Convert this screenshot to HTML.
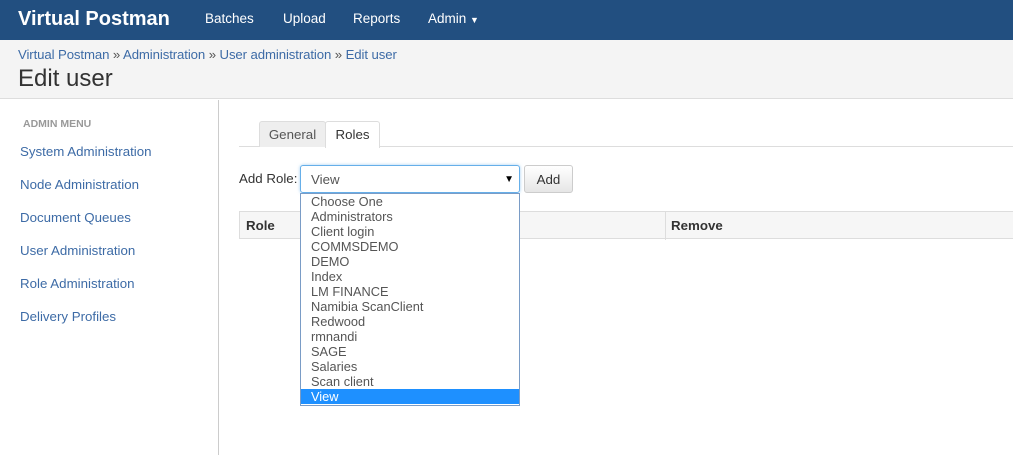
<!DOCTYPE html>
<html><head><meta charset="utf-8"><style>
*{box-sizing:border-box;margin:0;padding:0}
body{width:1013px;height:455px;overflow:hidden;font-family:"Liberation Sans",Arial,sans-serif;font-size:14px;color:#333;background:#fff;position:relative}
.nav{position:absolute;left:0;top:0;width:1013px;height:40px;background:#224f80}
.nav .brand{position:absolute;left:18px;top:8px;color:#fff;font-weight:bold;font-size:20px}
.nav a{position:absolute;top:11px;color:#fff;font-size:13.5px}
.hdr{position:absolute;left:0;top:40px;width:1013px;height:59px;background:#f4f4f4;border-bottom:1px solid #ddd}
.bc{position:absolute;left:18px;top:7px;color:#3d6ba6;font-size:13.2px;letter-spacing:-0.1px}
.bc span{color:#555}
.hdr h1{position:absolute;left:18px;top:25px;font-weight:normal;font-size:24px;color:#333}
.side{position:absolute;left:0;top:100px;width:219px;height:355px;border-right:1px solid #ccc}
.side .t{position:absolute;left:23px;top:18px;font-size:10.5px;font-weight:bold;color:#999}
.side a{position:absolute;left:20px;color:#3d6ba6;font-size:13.3px}
.tabline{position:absolute;left:239px;top:146px;width:774px;height:1px;background:#ddd}
.tab{position:absolute;top:121px;height:26px;border:1px solid #ddd;border-bottom:none;border-radius:3px 3px 0 0;padding:5px 0;text-align:center;font-size:13.3px}
.lbl{position:absolute;left:239px;top:171px;font-size:13.3px}
.sel{position:absolute;left:300px;top:165px;width:220px;height:28px;border:1px solid #66afe9;border-radius:3px;box-shadow:0 0 3px rgba(102,175,233,.6);padding:6px 10px;color:#555;font-size:13.3px}
.sel i{position:absolute;right:5px;top:8px;font-style:normal;font-size:10px;color:#000}
.btn{position:absolute;left:524px;top:165px;width:49px;height:28px;border:1px solid #ccc;border-radius:3px;background:linear-gradient(#fff,#e6e6e6);text-align:center;padding-top:6px;font-size:13.3px}
.th{position:absolute;left:239px;top:211px;width:780px;height:28px;border:1px solid #ddd;background:#f6f6f6;font-weight:bold;font-size:13.3px}
.th span{position:absolute;top:6px}
.th .d{position:absolute;left:425px;top:0;width:1px;height:28px;background:#ddd}
.dd{position:absolute;left:300px;top:193px;width:220px;height:213px;border:1px solid #7a9cc6;background:#fff;padding-top:0}
.dd div{height:15px;line-height:15px;padding-left:10px;color:#555;font-size:12.8px}
.dd div.s{background:#1e90ff;color:#fff}
</style></head><body>
<div class="nav"><div class="brand">Virtual Postman</div>
<a style="left:205px">Batches</a><a style="left:283px">Upload</a><a style="left:353px">Reports</a><a style="left:428px">Admin <span style="font-size:9px">▼</span></a></div>
<div class="hdr"><div class="bc">Virtual Postman <span>»</span> Administration <span>»</span> User administration <span>»</span> Edit user</div><h1>Edit user</h1></div>
<div class="side"><div class="t">ADMIN MENU</div>
<a style="top:44px">System Administration</a><a style="top:77px">Node Administration</a><a style="top:110px">Document Queues</a><a style="top:143px">User Administration</a><a style="top:176px">Role Administration</a><a style="top:209px">Delivery Profiles</a></div>
<div class="tabline"></div>
<div class="tab" style="left:259px;width:67px;background:#eee;color:#555">General</div>
<div class="tab" style="left:325px;width:55px;background:#fff;height:27px">Roles</div>
<div class="lbl">Add Role:</div>
<div class="sel">View<i>▼</i></div>
<div class="btn">Add</div>
<div class="th"><span style="left:6px">Role</span><div class="d"></div><span style="left:431px">Remove</span></div>
<div class="dd"><div>Choose One</div><div>Administrators</div><div>Client login</div><div>COMMSDEMO</div><div>DEMO</div><div>Index</div><div>LM FINANCE</div><div>Namibia ScanClient</div><div>Redwood</div><div>rmnandi</div><div>SAGE</div><div>Salaries</div><div>Scan client</div><div class="s">View</div></div>
</body></html>
